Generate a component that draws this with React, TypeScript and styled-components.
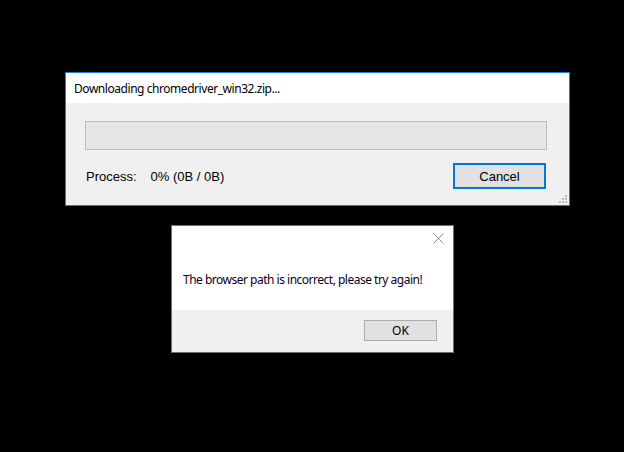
import React from 'react';
import styled, { createGlobalStyle } from 'styled-components';

const GlobalStyle = createGlobalStyle`
  html, body {
    margin: 0;
    padding: 0;
    background: #000;
  }
  #root {
    width: 624px;
    height: 452px;
  }
`;

const ResizeGrip = () => (
  <St.Grip width="10" height="10" viewBox="0 0 10 10">
    {[
      [7, 1],
      [4, 4],
      [7, 4],
      [1, 7],
      [4, 7],
      [7, 7],
    ].map(([x, y]) => (
      <rect key={`${x}-${y}`} x={x} y={y} width="2" height="2" fill="#bcbcbc" />
    ))}
  </St.Grip>
);

const CloseIcon = () => (
  <svg width="11" height="11" viewBox="0 0 11 11">
    <path d="M0.5 0.5 L10.5 10.5 M10.5 0.5 L0.5 10.5" stroke="#8a8a8a" strokeWidth="1" />
  </svg>
);

const App = () => {
  return (
    <>
      <GlobalStyle />
      <St.Desktop>
        <St.ProgressWindow>
          <St.TitleBar>Downloading chromedriver_win32.zip...</St.TitleBar>
          <St.ProgressBody>
            <St.ProgressTrack />
            <St.StatusRow>
              <St.StatusText>
                <span>Process:</span>
                <span>0% (0B / 0B)</span>
              </St.StatusText>
              <St.Button $focused>Cancel</St.Button>
            </St.StatusRow>
            <ResizeGrip />
          </St.ProgressBody>
        </St.ProgressWindow>

        <St.MessageBox>
          <St.MessageTop>
            <St.CloseButton>
              <CloseIcon />
            </St.CloseButton>
            <St.Message>The browser path is incorrect, please try again!</St.Message>
          </St.MessageTop>
          <St.MessageFooter>
            <St.OkButton>OK</St.OkButton>
          </St.MessageFooter>
        </St.MessageBox>
      </St.Desktop>
    </>
  );
};

export default App;

const St = {
  Desktop: styled.div`
    position: relative;
    width: 624px;
    height: 452px;
    background: #000;
    overflow: hidden;
  `,
  ProgressWindow: styled.div`
    position: absolute;
    left: 65px;
    top: 72px;
    width: 503px;
    height: 132px;
    border: 1px solid #1883d7;
    display: flex;
    flex-direction: column;
    background: #f0f0f0;
  `,
  TitleBar: styled.div`
    height: 30px;
    background: #fff;
    padding-left: 8px;
    display: flex;
    align-items: center;
    font-family: 'Noto Sans', sans-serif;
    font-size: 12px;
    letter-spacing: -0.45px;
    color: #000;
  `,
  ProgressBody: styled.div`
    position: relative;
    flex: 1;
    padding: 18px 22px 0 19px;
    display: flex;
    flex-direction: column;
  `,
  ProgressTrack: styled.div`
    height: 27px;
    background: #e6e6e6;
    border: 1px solid #bcbcbc;
  `,
  StatusRow: styled.div`
    margin-top: 13px;
    display: flex;
    align-items: center;
    justify-content: space-between;
  `,
  StatusText: styled.div`
    display: flex;
    gap: 14px;
    padding-left: 1px;
    font-family: 'Liberation Sans', Arial, sans-serif;
    font-size: 13px;
    color: #000;
  `,
  Button: styled.button<{ $focused?: boolean }>`
    width: 93px;
    height: 26px;
    margin-right: 1px;
    box-sizing: border-box;
    border: ${(p) => (p.$focused ? '2px solid #0078d7' : '1px solid #adadad')};
    background: #e1e1e1;
    font-family: 'Liberation Sans', Arial, sans-serif;
    font-size: 13px;
    color: #000;
    padding: 0;
  `,
  Grip: styled.svg`
    position: absolute;
    right: 1px;
    bottom: 1px;
  `,
  MessageBox: styled.div`
    position: absolute;
    left: 171px;
    top: 225px;
    width: 281px;
    height: 126px;
    border: 1px solid #6f6f6f;
    display: flex;
    flex-direction: column;
  `,
  MessageTop: styled.div`
    position: relative;
    height: 84px;
    background: #fff;
    padding-left: 11px;
    display: flex;
    align-items: flex-end;
  `,
  CloseButton: styled.div`
    position: absolute;
    top: 7px;
    right: 9px;
    display: flex;
  `,
  Message: styled.div`
    padding-bottom: 22px;
    font-family: 'Noto Sans', sans-serif;
    font-size: 12px;
    letter-spacing: -0.5px;
    color: #0a0020;
  `,
  MessageFooter: styled.div`
    flex: 1;
    background: #f0f0f0;
    display: flex;
    align-items: flex-start;
    justify-content: flex-end;
    padding: 10px 16px 0 0;
  `,
  OkButton: styled.button`
    width: 73px;
    height: 21px;
    box-sizing: border-box;
    border: 1px solid #adadad;
    background: #e1e1e1;
    font-family: 'Noto Sans', sans-serif;
    font-size: 12px;
    color: #000;
    padding: 0;
  `,
};
